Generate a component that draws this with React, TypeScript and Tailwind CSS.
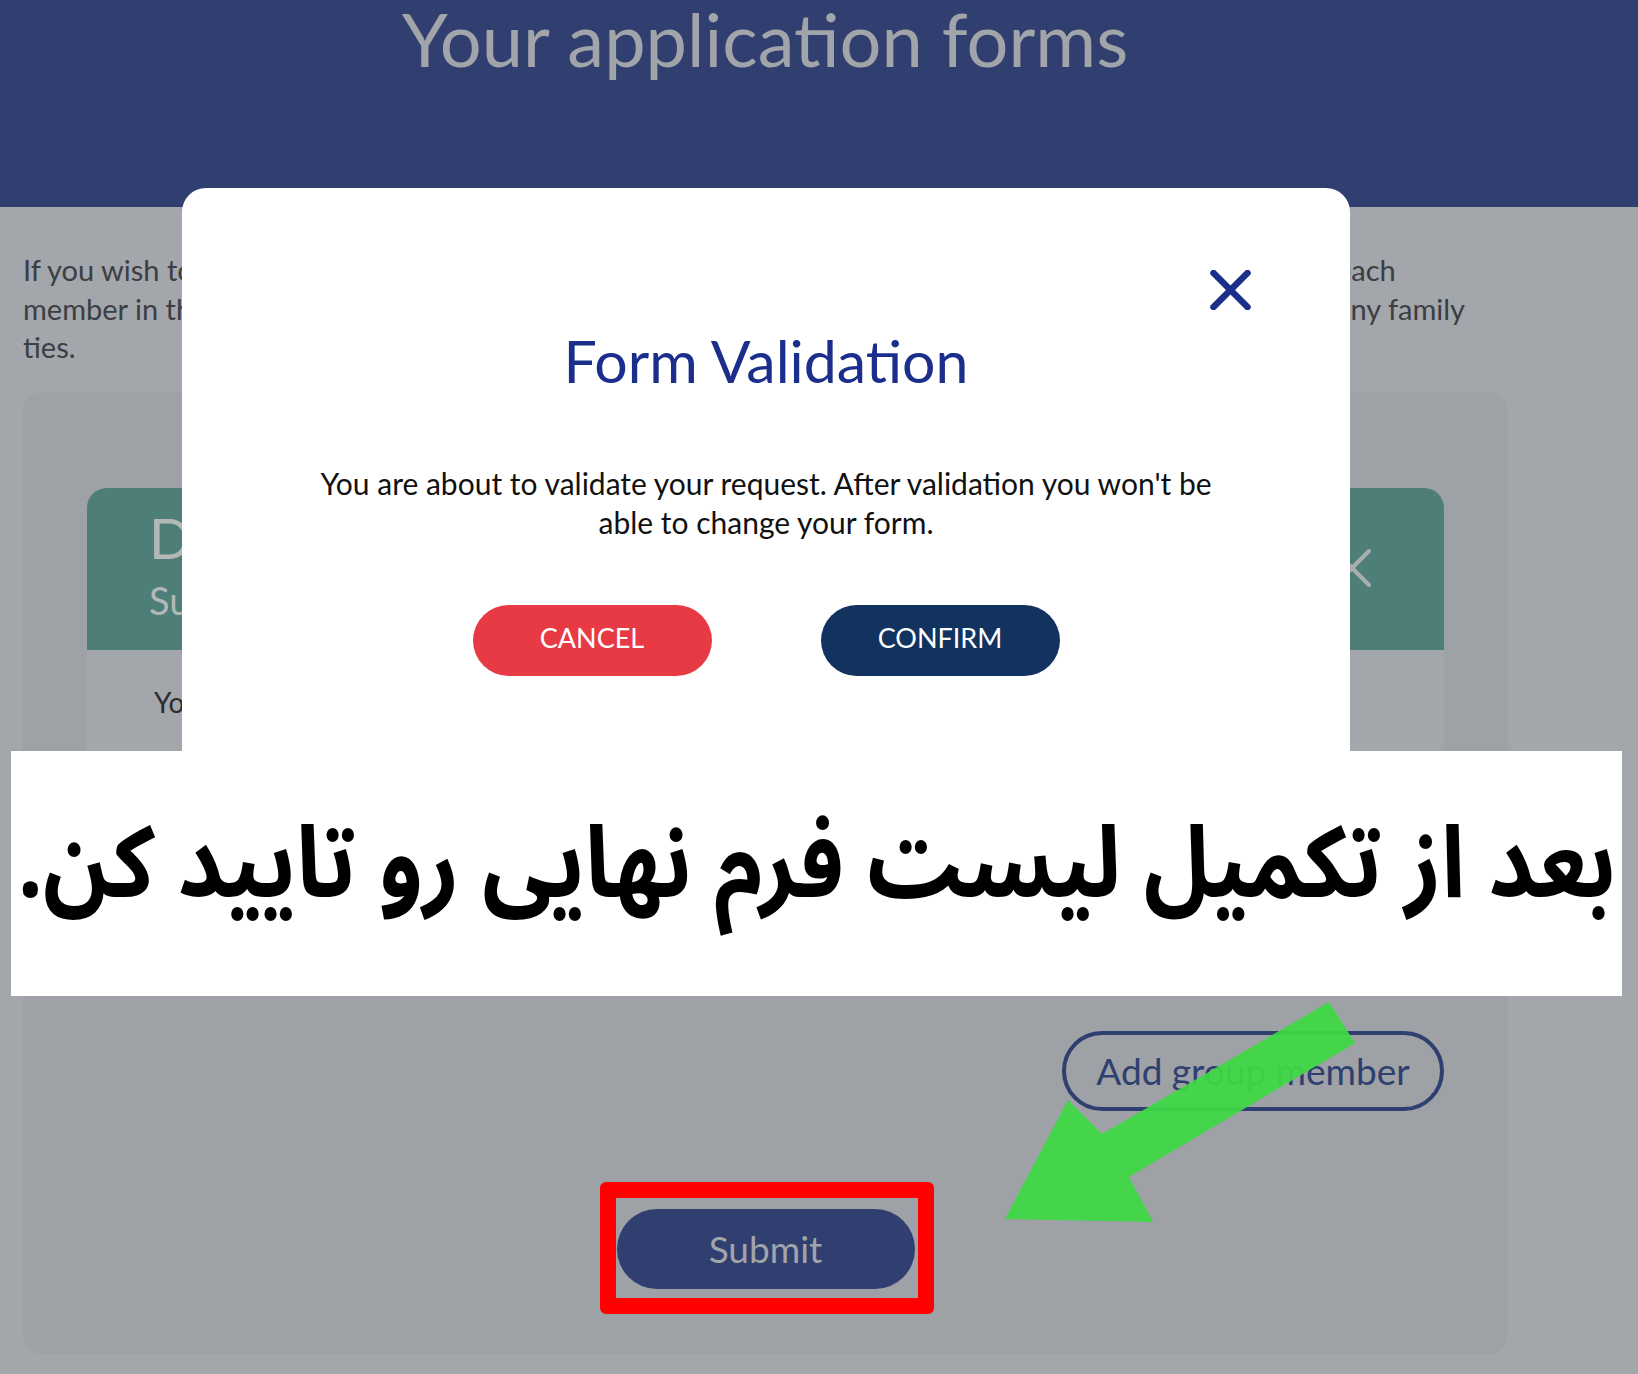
import React from "react";

const latin = { fontFamily: "Lato, 'Noto Sans', sans-serif" };

function CloseIcon({ className, color, width }: { className: string; color: string; width: number }) {
  return (
    <svg viewBox="0 0 40 40" className={className}>
      <line x1="3" y1="3" x2="37" y2="37" stroke={color} strokeWidth={width} strokeLinecap="round" />
      <line x1="37" y1="3" x2="3" y2="37" stroke={color} strokeWidth={width} strokeLinecap="round" />
    </svg>
  );
}

export default function App() {
  return (
    <div className="relative w-[1638px] h-[1374px] overflow-hidden bg-[#a3a6aa]" style={latin}>
      {/* Header */}
      <div className="h-[207px] bg-[#303f6f]">
        <div className="ml-[23px] w-[1484px] pt-[2px] text-center text-[74px] leading-[74px] text-[#a1a4a9]">
          Your application forms
        </div>
      </div>

      {/* Intro paragraph */}
      <div className="ml-[23px] w-[1484px] mt-[44px] text-[29px] leading-[38.5px] text-[#3b3e43]">
        <div className="flex">
          <span className="w-[1313px] overflow-hidden whitespace-nowrap">If you wish to add several people to your application, please fill in a form for</span>
          <span className="whitespace-nowrap">each</span>
        </div>
        <div className="flex">
          <span className="w-[1313px] overflow-hidden whitespace-nowrap">member in the group and indicate whether you share any</span>
          <span className="whitespace-nowrap">any family</span>
        </div>
        <div>ties.</div>
      </div>

      {/* Main card */}
      <div className="ml-[23px] mt-[25px] w-[1485px] h-[962px] rounded-[20px] bg-[#9ea1a5] px-[64px] pt-[96px]">
        <div className="h-[162px] rounded-t-[20px] bg-[#4d7e77] flex justify-between pl-[62px] pr-[72px]">
          <div className="text-[#b3b8b6]">
            <div className="pt-[22px] text-[56px] leading-[56px]">Dependant</div>
            <div className="mt-[15px] text-[38px] leading-[38px]">Submitted form</div>
          </div>
          <div className="pt-[60px]">
            <CloseIcon className="w-[40px] h-[40px]" color="#a9afad" width={4} />
          </div>
        </div>
        <div className="h-[240px] bg-[#a3a6aa] pl-[67px] pt-[38px] text-[28px] leading-[28px] text-[#2b2d31]">
          You have filled in the form for this group member.
        </div>
        <div className="mt-[141px] flex justify-end">
          <div className="w-[382px] h-[80px] rounded-full border-[4px] border-[#2f3f70] flex items-center justify-center text-[37px] text-[#2f3f70]">
            Add group member
          </div>
        </div>
        <div className="mt-[98px] flex justify-center">
          <div className="w-[298px] h-[80px] rounded-full bg-[#303f6f] flex items-center justify-center text-[37px] text-[#a1a4a9]">
            Submit
          </div>
        </div>
      </div>

      {/* Modal */}
      <div className="absolute left-[182px] top-[188px] w-[1168px] h-[640px] rounded-[24px] bg-white">
        <div className="pt-[82px] pr-[99px] flex justify-end">
          <CloseIcon className="w-[41px] h-[40px]" color="#1b2f8a" width={6.5} />
        </div>
        <div className="mt-[21px] text-center text-[59px] leading-[59px] text-[#1b2e8b]">Form Validation</div>
        <div className="mt-[74px] text-center text-[30px] leading-[39px] text-[#111111]">
          You are about to validate your request. After validation you won't be
          <br />
          able to change your form.
        </div>
        <div className="mt-[63px] flex justify-center gap-[109px]">
          <div className="w-[239px] h-[71px] rounded-full bg-[#e83a45] flex items-center justify-center pb-[4px] text-[27px] text-white">
            CANCEL
          </div>
          <div className="w-[239px] h-[71px] rounded-full bg-[#12335f] flex items-center justify-center pb-[4px] text-[27px] text-white">
            CONFIRM
          </div>
        </div>
      </div>

      {/* Persian annotation banner */}
      <div className="absolute left-[11px] top-[751px] w-[1611px] h-[245px] bg-white flex items-center justify-center pb-[16px]">
        <div
          dir="rtl"
          className="shrink-0 w-max whitespace-nowrap font-bold text-black text-[100px] leading-[100px] scale-x-[0.885]"
          style={{ fontFamily: "'Noto Sans Arabic', 'DejaVu Sans', sans-serif" }}
        >
          بعد از تکمیل لیست فرم نهایی رو تایید کن.
        </div>
      </div>

      {/* Red highlight box */}
      <div className="absolute left-[600px] top-[1182px] w-[334px] h-[132px] border-[16px] border-[#ff0000] rounded-[6px]" />

      {/* Green arrow */}
      <svg className="absolute left-0 top-0 w-[1638px] h-[1374px] pointer-events-none" viewBox="0 0 1638 1374">
        <polygon
          points="1005,1219 1068,1100 1102,1134 1329,1002 1355,1043 1129,1177 1153,1222"
          fill="#3ed944"
          fillOpacity="0.93"
        />
      </svg>
    </div>
  );
}
